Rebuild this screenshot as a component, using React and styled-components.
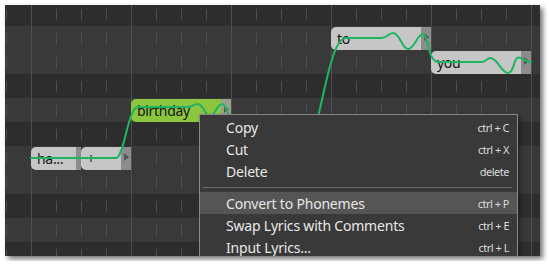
import React from "react";
import styled, { createGlobalStyle } from "styled-components";

const GlobalStyle = createGlobalStyle`
  body {
    margin: 0;
    background: #ffffff;
    font-family: "Noto Sans", "Open Sans", sans-serif;
  }
`;

const Page = styled.div`
  padding: 5px;
`;

const Panel = styled.div`
  position: relative;
  width: 535px;
  height: 251px;
  overflow: hidden;
  background: #2d2d2d;
  box-shadow: 3px 3px 5px rgba(0, 0, 0, 0.55);
`;

const Grid = styled.div`
  display: flex;
  flex-direction: column;
  margin-top: -3px;
`;

const Row = styled.div`
  height: 24px;
  flex: none;
  background-color: ${(p) => (p.$black ? "#2d2d2d" : "#393939")};
  background-image: linear-gradient(to right, #4f4f4f 1px, transparent 1px),
    linear-gradient(to right, #4e4e4e 1px, transparent 1px);
  background-size: 100px 100%, 25px 11px;
  background-position: 26px 0, 1px center;
  background-repeat: repeat-x;
`;

const Note = styled.div`
  position: absolute;
  left: ${(p) => p.$x}px;
  top: ${(p) => p.$y}px;
  width: ${(p) => p.$w}px;
  height: 23px;
  display: flex;
  border-radius: 5px 0 0 5px;
  background: ${(p) => (p.$green ? "#8cc63f" : "#c6c6c6")};
  color: #141414;
  font-size: 14px;
  letter-spacing: -0.3px;
  line-height: 23px;
`;

const Lyric = styled.span`
  flex: 1;
  padding-left: 6px;
  white-space: nowrap;
  overflow: hidden;
`;

const Handle = styled.div`
  width: ${(p) => p.$w}px;
  flex: none;
  display: flex;
  align-items: center;
  justify-content: center;
  background: ${(p) => (p.$green ? "#9aa090" : "#8c8c8c")};

  &::after {
    content: "";
    display: ${(p) => (p.$arrow ? "block" : "none")};
    margin-top: -4px;
    border-left: 5px solid #555;
    border-top: 4px solid transparent;
    border-bottom: 4px solid transparent;
  }
`;

const Curve = styled.svg`
  position: absolute;
  left: 0;
  top: 0;
  pointer-events: none;
`;

const Menu = styled.div`
  position: absolute;
  left: 194px;
  top: 109px;
  width: 319px;
  box-sizing: border-box;
  padding: 1px 0 12px;
  background: #393939;
  border: 1px solid #8a8a8a;
  box-shadow: 2px 2px 4px rgba(0, 0, 0, 0.4);
`;

const Item = styled.div`
  display: flex;
  align-items: center;
  justify-content: space-between;
  height: 22px;
  padding: 0 8px 0 26px;
  background: ${(p) => (p.$active ? "#555555" : "transparent")};
  color: #e8e8e8;
  font-size: 14px;
  letter-spacing: -0.2px;
`;

const Shortcut = styled.span`
  font-size: 11px;
  letter-spacing: -0.5px;
  color: #dcdcdc;
`;

const Separator = styled.div`
  height: 1px;
  margin: 5px 5px 4px 3px;
  background: #6a6a6a;
`;

const rows = [true, false, false, true, false, true, false, false, true, false, true];

const notes = [
  { x: 26, y: 142, w: 50, text: "ha...", handle: 5, arrow: false },
  { x: 76, y: 142, w: 50, text: "+", handle: 10, arrow: true },
  { x: 126, y: 94, w: 100, text: "birthday", handle: 10, arrow: true, green: true },
  { x: 326, y: 22, w: 100, text: "to", handle: 10, arrow: true },
  { x: 426, y: 46, w: 100, text: "you", handle: 10, arrow: true },
];

const pitch =
  "M31,158 L116,158 C124,158 128,107 138,107 L188,107 C192,107 194,104 198,104 " +
  "C203,104 205,116 210,116 C215,116 217,104 222,104 C228,104 230,125 236,140 " +
  "L300,160 C320,150 326,38 346,38 L382,38 C386,38 389,33 393,33 " +
  "C400,33 402,49 408,49 C415,49 417,34 423,34 C428,34 428,62 438,62 L482,62 " +
  "C486,62 487,58 490,58 C498,58 501,73 508,73 C514,73 514,57.5 518,57.5 C523,57.5 525,62 531,62";

export default function App() {
  return (
    <Page>
      <GlobalStyle />
      <Panel>
        <Grid>
          {rows.map((black, i) => (
            <Row key={i} $black={black} />
          ))}
        </Grid>

        {notes.map((n, i) => (
          <Note key={i} $x={n.x} $y={n.y} $w={n.w} $green={n.green}>
            <Lyric>{n.text}</Lyric>
            <Handle $w={n.handle} $arrow={n.arrow} $green={n.green} />
          </Note>
        ))}

        <Curve width="535" height="251" viewBox="5 5 535 251">
          <path d={pitch} fill="none" stroke="#1fb464" strokeWidth="2" strokeLinecap="round" />
        </Curve>

        <Menu>
          <Item>Copy<Shortcut>ctrl + C</Shortcut></Item>
          <Item>Cut<Shortcut>ctrl + X</Shortcut></Item>
          <Item>Delete<Shortcut>delete</Shortcut></Item>
          <Separator />
          <Item $active>Convert to Phonemes<Shortcut>ctrl + P</Shortcut></Item>
          <Item>Swap Lyrics with Comments<Shortcut>ctrl + E</Shortcut></Item>
          <Item>Input Lyrics...<Shortcut>ctrl + L</Shortcut></Item>
        </Menu>
      </Panel>
    </Page>
  );
}
